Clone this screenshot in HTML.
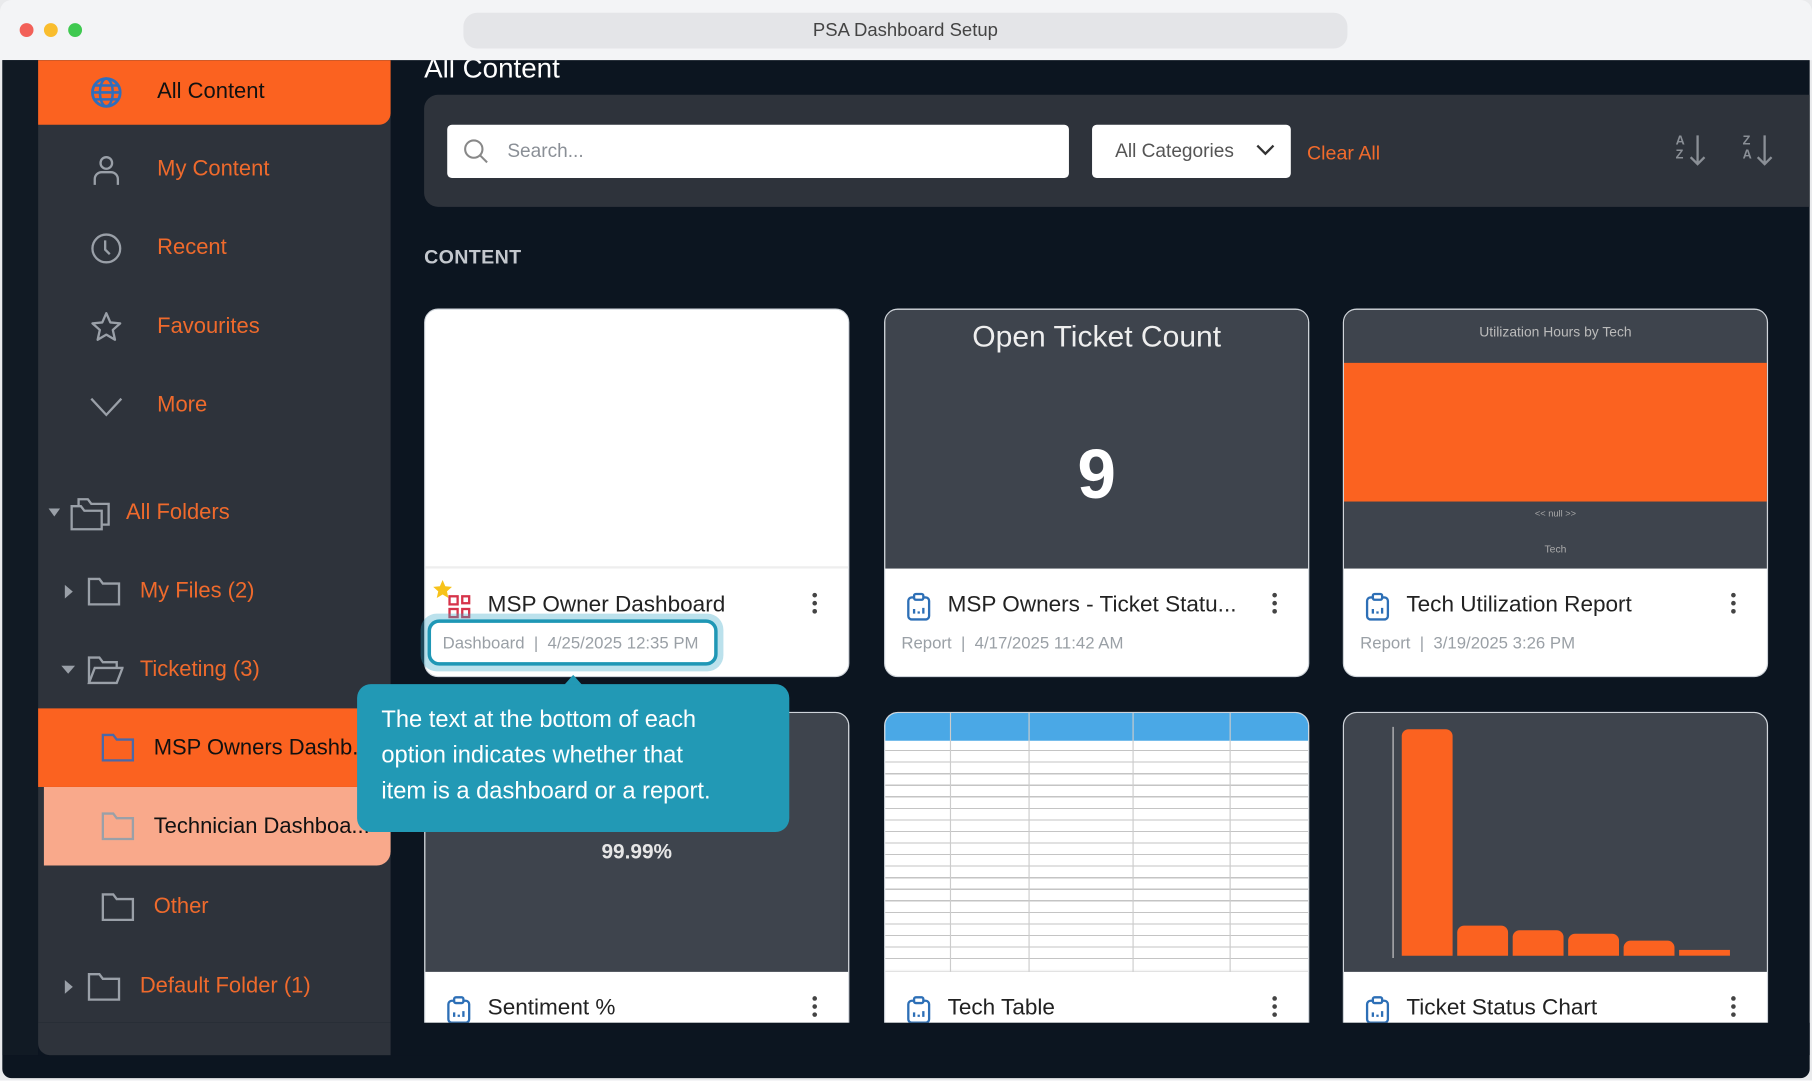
<!DOCTYPE html>
<html><head><meta charset="utf-8">
<style>
*{box-sizing:border-box;margin:0;padding:0}
html,body{width:1812px;height:1080px;overflow:hidden;background:#fff;font-family:"Liberation Sans",Arial,sans-serif}
#w{position:absolute;left:0;top:0;width:1568px;height:935px;transform:scale(1.15561);transform-origin:0 0;background:#e9eaec;overflow:hidden}
.abs{position:absolute}
.tb{left:0;top:0;width:1568px;height:52px;background:#f3f4f6;border-radius:10px 10px 0 0}
.dot{width:12px;height:12px;border-radius:50%;top:20px}
.url{left:401px;top:11px;width:765px;height:31px;background:#e4e5e8;border-radius:12px;text-align:center;line-height:31px;font-size:16px;color:#444}
.body{left:2px;top:52px;width:1564px;height:881px;background:#0c1520;border-radius:0 0 8px 8px;overflow:hidden}
.side{left:31px;top:0;width:305px;height:861px;background:#2e333b;border-radius:0 0 0 10px}
.nav{position:absolute;left:0;width:305px;height:58px;font-size:19px;color:#ef6a2c;display:flex;align-items:center}
.nav .t{position:absolute;left:103px}
.nav svg{position:absolute;left:44px}
.card{position:absolute;width:368px;background:#fff;border-radius:12px;overflow:hidden;border:1px solid #cfd4da}
.prev{position:absolute;left:0;top:0;width:100%;height:224px;background:#3e444d}
.ct{position:absolute;left:54px;top:244px;font-size:19.5px;color:#222;white-space:nowrap}
.meta{position:absolute;left:14px;top:281px;font-size:14.5px;color:#9aa0a6}
.ic{position:absolute;left:16px;top:244px}
.kb{position:absolute;right:27px;top:245px;width:4px}
.kb i{display:block;width:4px;height:4px;border-radius:50%;background:#444;margin-bottom:3px}
</style></head><body>
<div id="w">
<div class="abs tb"></div>
<div class="abs dot" style="left:17px;background:#f26058"></div>
<div class="abs dot" style="left:38px;background:#f9bd2e"></div>
<div class="abs dot" style="left:59px;background:#3fc950"></div>
<div class="abs url">PSA Dashboard Setup</div>

<div class="abs body">
 <div class="abs" style="left:0;top:0;width:31px;height:861px;background:#111a24"></div>
 <div class="abs side">
  <div class="nav" style="top:0;height:56px;background:#fb6220;border-radius:0 0 10px 0;color:#111">
   <svg width="30" height="30" viewBox="0 0 30 30" style="left:44px"><circle cx="15" cy="15" r="12" fill="none" stroke="#2f6ebd" stroke-width="2.4"/><ellipse cx="15" cy="15" rx="5.5" ry="12" fill="none" stroke="#2f6ebd" stroke-width="2.2"/><path d="M3 15h24M5 9h20M5 21h20" stroke="#2f6ebd" stroke-width="2.2"/></svg>
   <span class="t">All Content</span></div>
  <div class="nav" style="top:66px"><svg width="30" height="30" viewBox="0 0 30 30"><circle cx="15" cy="9" r="5" fill="none" stroke="#9aa0a8" stroke-width="2"/><path d="M5 28v-5a6 6 0 0 1 6-6h8a6 6 0 0 1 6 6v5" fill="none" stroke="#9aa0a8" stroke-width="2"/></svg><span class="t">My Content</span></div>
  <div class="nav" style="top:134px"><svg width="30" height="30" viewBox="0 0 30 30"><circle cx="15" cy="15" r="12" fill="none" stroke="#9aa0a8" stroke-width="2"/><path d="M14 8v8l4 4" fill="none" stroke="#9aa0a8" stroke-width="2"/></svg><span class="t">Recent</span></div>
  <div class="nav" style="top:202px"><svg width="30" height="30" viewBox="0 0 30 30"><path d="M15 3l3.5 8 8.5.8-6.4 5.7 1.9 8.5L15 21.6 7.5 26l1.9-8.5L3 11.8l8.5-.8z" fill="none" stroke="#9aa0a8" stroke-width="2" stroke-linejoin="round"/></svg><span class="t">Favourites</span></div>
  <div class="nav" style="top:270px"><svg width="30" height="30" viewBox="0 0 30 30"><path d="M2 9l13 14L28 9" fill="none" stroke="#9aa0a8" stroke-width="2"/></svg><span class="t">More</span></div>

  <div class="nav" style="top:363px"><svg width="10" height="8" viewBox="0 0 10 8" style="left:9px"><path d="M0 0h10L5 7z" fill="#9aa0a8"/></svg><svg width="38" height="32" viewBox="0 0 38 32" style="left:26px"><path d="M9 4h8l3 4h15v18H9z" fill="none" stroke="#9aa0a8" stroke-width="2"/><path d="M3 10h8l3 4h15v16H3z" fill="#2e333b" stroke="#9aa0a8" stroke-width="2"/></svg><span class="t" style="left:76px">All Folders</span></div>
  <div class="nav" style="top:431px"><svg width="8" height="12" viewBox="0 0 8 12" style="left:23px"><path d="M0 0l7 6-7 6z" fill="#9aa0a8"/></svg><svg width="30" height="28" viewBox="0 0 30 28" style="left:42px"><path d="M2 3h9l3 4h14v18H2z" fill="none" stroke="#9aa0a8" stroke-width="2"/></svg><span class="t" style="left:88px">My Files (2)</span></div>
  <div class="nav" style="top:499px"><svg width="12" height="8" viewBox="0 0 12 8" style="left:20px"><path d="M0 0h12L6 7z" fill="#9aa0a8"/></svg><svg width="32" height="28" viewBox="0 0 32 28" style="left:42px"><path d="M2 25V3h9l3 4h12v5" fill="none" stroke="#9aa0a8" stroke-width="2"/><path d="M2 25l5-13h24l-5 13z" fill="none" stroke="#9aa0a8" stroke-width="2"/></svg><span class="t" style="left:88px">Ticketing (3)</span></div>
  <div class="nav" style="top:561px;height:68px;background:#fb6220;color:#111"><svg width="30" height="28" viewBox="0 0 30 28" style="left:54px"><path d="M2 3h9l3 4h14v18H2z" fill="none" stroke="#4a68a8" stroke-width="2"/></svg><span class="t" style="left:100px;top:24px">MSP Owners Dashb...</span></div>
  <div class="nav" style="top:629px;left:5px;width:300px;height:68px;background:#f9a98b;color:#111;border-radius:0 0 12px 0"><svg width="30" height="28" viewBox="0 0 30 28" style="left:49px"><path d="M2 3h9l3 4h14v18H2z" fill="none" stroke="#9aa0a8" stroke-width="2"/></svg><span class="t" style="left:95px;top:24px">Technician Dashboa...</span></div>
  <div class="nav" style="top:704px"><svg width="30" height="28" viewBox="0 0 30 28" style="left:54px"><path d="M2 3h9l3 4h14v18H2z" fill="none" stroke="#9aa0a8" stroke-width="2"/></svg><span class="t" style="left:100px">Other</span></div>
  <div class="nav" style="top:773px"><svg width="8" height="12" viewBox="0 0 8 12" style="left:23px"><path d="M0 0l7 6-7 6z" fill="#9aa0a8"/></svg><svg width="30" height="28" viewBox="0 0 30 28" style="left:42px"><path d="M2 3h9l3 4h14v18H2z" fill="none" stroke="#9aa0a8" stroke-width="2"/></svg><span class="t" style="left:88px">Default Folder (1)</span></div>
 </div>

 <div class="abs" style="left:365px;top:-6px;font-size:24px;color:#fff">All Content</div>
 <div class="abs" style="left:365px;top:30px;width:1210px;height:97px;background:#2e333b;border-radius:12px"></div>
 <div class="abs" style="left:385px;top:56px;width:538px;height:46px;background:#fff;border-radius:4px"></div>
 <svg class="abs" style="left:398px;top:67px" width="24" height="24" viewBox="0 0 24 24"><circle cx="10" cy="10" r="7.5" fill="none" stroke="#888" stroke-width="1.8"/><path d="M15.5 15.5l6 6" stroke="#888" stroke-width="1.8"/></svg>
 <div class="abs" style="left:437px;top:70px;font-size:16.5px;color:#8a8f96">Search...</div>
 <div class="abs" style="left:943px;top:56px;width:172px;height:46px;background:#fff;border-radius:4px;font-size:16.5px;color:#555;line-height:46px;padding-left:20px">All Categories</div>
 <svg class="abs" style="left:1084px;top:72px" width="18" height="12" viewBox="0 0 18 12"><path d="M2 2l7 7 7-7" fill="none" stroke="#333" stroke-width="2"/></svg>
 <div class="abs" style="left:1129px;top:71px;font-size:17px;color:#f26b2c">Clear All</div>
 <div class="abs" style="left:1448px;top:64px;font-size:11px;line-height:12px;color:#8a8f96;font-weight:bold">A<br>Z</div>
 <svg class="abs" style="left:1460px;top:65px" width="14" height="28" viewBox="0 0 14 28"><path d="M7 0v25M1 19l6 6 6-6" fill="none" stroke="#8a8f96" stroke-width="2"/></svg>
 <div class="abs" style="left:1506px;top:64px;font-size:11px;line-height:12px;color:#8a8f96;font-weight:bold">Z<br>A</div>
 <svg class="abs" style="left:1518px;top:65px" width="14" height="28" viewBox="0 0 14 28"><path d="M7 0v25M1 19l6 6 6-6" fill="none" stroke="#8a8f96" stroke-width="2"/></svg>

 <div class="abs" style="left:365px;top:161px;font-size:17px;font-weight:bold;color:#c4c8ce;letter-spacing:.3px">CONTENT</div>
</div>

<div class="card" style="left:367px;top:267px;height:319px">
 <div class="prev" style="background:#fff;border-bottom:2px solid #eee"></div>
 <svg class="ic" width="26" height="26" viewBox="0 0 26 26" style="left:16px"><rect x="5" y="4" width="7" height="7" fill="none" stroke="#d6334a" stroke-width="2"/><rect x="16" y="4" width="6" height="6" fill="none" stroke="#d6334a" stroke-width="2"/><rect x="5" y="15" width="7" height="7" fill="none" stroke="#d6334a" stroke-width="2"/><rect x="16" y="15" width="6" height="7" fill="none" stroke="#d6334a" stroke-width="2"/></svg>
 <svg class="abs" style="left:6px;top:233px" width="18" height="18" viewBox="0 0 20 20"><path d="M10 1l2.6 6 6.4.6-4.8 4.3 1.4 6.4L10 15l-5.6 3.3 1.4-6.4L1 7.6 7.4 7z" fill="#f7c21a"/></svg>
 <div class="ct">MSP Owner Dashboard</div>
 <div class="kb"><i></i><i></i><i></i></div>
</div>
<div class="card" style="left:765px;top:267px;height:319px">
 <div class="prev"><div class="abs" style="left:0;width:100%;top:8px;text-align:center;font-size:26px;color:#eee">Open Ticket Count</div><div class="abs" style="left:0;width:100%;top:108px;text-align:center;font-size:60px;font-weight:bold;color:#fff">9</div></div>
 <svg class="ic" width="26" height="26" viewBox="0 0 26 26"><rect x="4" y="5" width="18" height="19" rx="3" fill="none" stroke="#2d6fb6" stroke-width="2"/><rect x="9" y="2" width="8" height="5" rx="1.5" fill="#fff" stroke="#2d6fb6" stroke-width="2"/><path d="M9 19v-4M13 19v-2M17 19v-5" stroke="#2d6fb6" stroke-width="2"/></svg>
 <div class="ct">MSP Owners - Ticket Statu...</div>
 <div class="meta">Report&nbsp; | &nbsp;4/17/2025 11:42 AM</div>
 <div class="kb"><i></i><i></i><i></i></div>
</div>
<div class="card" style="left:1162px;top:267px;height:319px">
 <div class="prev"><div class="abs" style="left:0;width:100%;top:12px;text-align:center;font-size:12px;color:#bbb">Utilization Hours by Tech</div><div class="abs" style="left:0;top:46px;width:100%;height:120px;background:#fb6220"></div><div class="abs" style="left:0;width:100%;top:172px;text-align:center;font-size:8px;color:#aaa">&lt;&lt; null &gt;&gt;</div><div class="abs" style="left:0;width:100%;top:202px;text-align:center;font-size:9px;color:#aaa">Tech</div></div>
 <svg class="ic" width="26" height="26" viewBox="0 0 26 26"><rect x="4" y="5" width="18" height="19" rx="3" fill="none" stroke="#2d6fb6" stroke-width="2"/><rect x="9" y="2" width="8" height="5" rx="1.5" fill="#fff" stroke="#2d6fb6" stroke-width="2"/><path d="M9 19v-4M13 19v-2M17 19v-5" stroke="#2d6fb6" stroke-width="2"/></svg>
 <div class="ct">Tech Utilization Report</div>
 <div class="meta">Report&nbsp; | &nbsp;3/19/2025 3:26 PM</div>
 <div class="kb"><i></i><i></i><i></i></div>
</div>

<div class="card" style="left:367px;top:616px;height:270px;border-radius:12px 12px 0 0">
 <div class="prev"><div class="abs" style="left:0;width:100%;top:110px;text-align:center;font-size:18px;font-weight:bold;color:#e6e6e6">99.99%</div></div>
 <svg class="ic" width="26" height="26" viewBox="0 0 26 26"><rect x="4" y="5" width="18" height="19" rx="3" fill="none" stroke="#2d6fb6" stroke-width="2"/><rect x="9" y="2" width="8" height="5" rx="1.5" fill="#fff" stroke="#2d6fb6" stroke-width="2"/><path d="M9 19v-4M13 19v-2M17 19v-5" stroke="#2d6fb6" stroke-width="2"/></svg>
 <div class="ct">Sentiment %</div>
 <div class="kb"><i></i><i></i><i></i></div>
</div>
<div class="card" style="left:765px;top:616px;height:270px;border-radius:12px 12px 0 0">
 <div class="prev" style="background:#fff;border-bottom:1px solid #ddd">
  <div class="abs" style="left:0;top:0;width:100%;height:24px;background:#4aa8e6"></div>
  <div class="abs" style="left:0;top:26px;width:100%;height:196px;background:repeating-linear-gradient(#fff 0 6px,#555 6px 7px,#fff 7px 10px);opacity:.35"></div>
  <div class="abs" style="left:56px;top:0;width:1px;height:224px;background:#ccc"></div>
  <div class="abs" style="left:124px;top:0;width:1px;height:224px;background:#ccc"></div>
  <div class="abs" style="left:214px;top:0;width:1px;height:224px;background:#ccc"></div>
  <div class="abs" style="left:298px;top:0;width:1px;height:224px;background:#ccc"></div>
 </div>
 <svg class="ic" width="26" height="26" viewBox="0 0 26 26"><rect x="4" y="5" width="18" height="19" rx="3" fill="none" stroke="#2d6fb6" stroke-width="2"/><rect x="9" y="2" width="8" height="5" rx="1.5" fill="#fff" stroke="#2d6fb6" stroke-width="2"/><path d="M9 19v-4M13 19v-2M17 19v-5" stroke="#2d6fb6" stroke-width="2"/></svg>
 <div class="ct">Tech Table</div>
 <div class="kb"><i></i><i></i><i></i></div>
</div>
<div class="card" style="left:1162px;top:616px;height:270px;border-radius:12px 12px 0 0">
 <div class="prev">
  <div class="abs" style="left:42px;top:12px;width:1px;height:200px;background:#ccc"></div>
  <div class="abs" style="left:50px;top:14px;width:44px;height:196px;background:#fb6220;border-radius:6px 6px 0 0"></div>
  <div class="abs" style="left:98px;top:184px;width:44px;height:26px;background:#fb6220;border-radius:6px 6px 0 0"></div>
  <div class="abs" style="left:146px;top:188px;width:44px;height:22px;background:#fb6220;border-radius:6px 6px 0 0"></div>
  <div class="abs" style="left:194px;top:191px;width:44px;height:19px;background:#fb6220;border-radius:6px 6px 0 0"></div>
  <div class="abs" style="left:242px;top:197px;width:44px;height:13px;background:#fb6220;border-radius:6px 6px 0 0"></div>
  <div class="abs" style="left:290px;top:205px;width:44px;height:5px;background:#fb6220"></div>
 </div>
 <svg class="ic" width="26" height="26" viewBox="0 0 26 26"><rect x="4" y="5" width="18" height="19" rx="3" fill="none" stroke="#2d6fb6" stroke-width="2"/><rect x="9" y="2" width="8" height="5" rx="1.5" fill="#fff" stroke="#2d6fb6" stroke-width="2"/><path d="M9 19v-4M13 19v-2M17 19v-5" stroke="#2d6fb6" stroke-width="2"/></svg>
 <div class="ct">Ticket Status Chart</div>
 <div class="kb"><i></i><i></i><i></i></div>
</div>
<div class="abs" style="left:33px;top:885px;width:1533px;height:28px;background:#0c1520"></div>
<div class="abs" style="left:33px;top:885px;width:305px;height:28px;background:#2e333b;border-radius:0 0 0 10px"></div>

<div class="abs" style="left:364px;top:531px;width:262px;height:50px;border-radius:14px;background:rgba(60,170,200,.35)"></div>
<div class="abs" style="left:370px;top:536px;width:251px;height:40px;border-radius:10px;border:3px solid #1f97b5;background:#fff;font-size:14.5px;color:#9aa0a6;line-height:36px;padding-left:10px">Dashboard&nbsp; | &nbsp;4/25/2025 12:35 PM</div>
<div class="abs" style="left:488px;top:584px;width:0;height:0;border-left:8px solid transparent;border-right:8px solid transparent;border-bottom:9px solid #2299b5"></div>
<div class="abs" style="left:309px;top:592px;width:374px;height:128px;background:#2299b5;border-radius:12px;padding:15px 50px 15px 21px;font-size:20.5px;line-height:31px;color:#fff">The text at the bottom of each option indicates whether that item is a dashboard or a report.</div>
</div>
</body></html>
